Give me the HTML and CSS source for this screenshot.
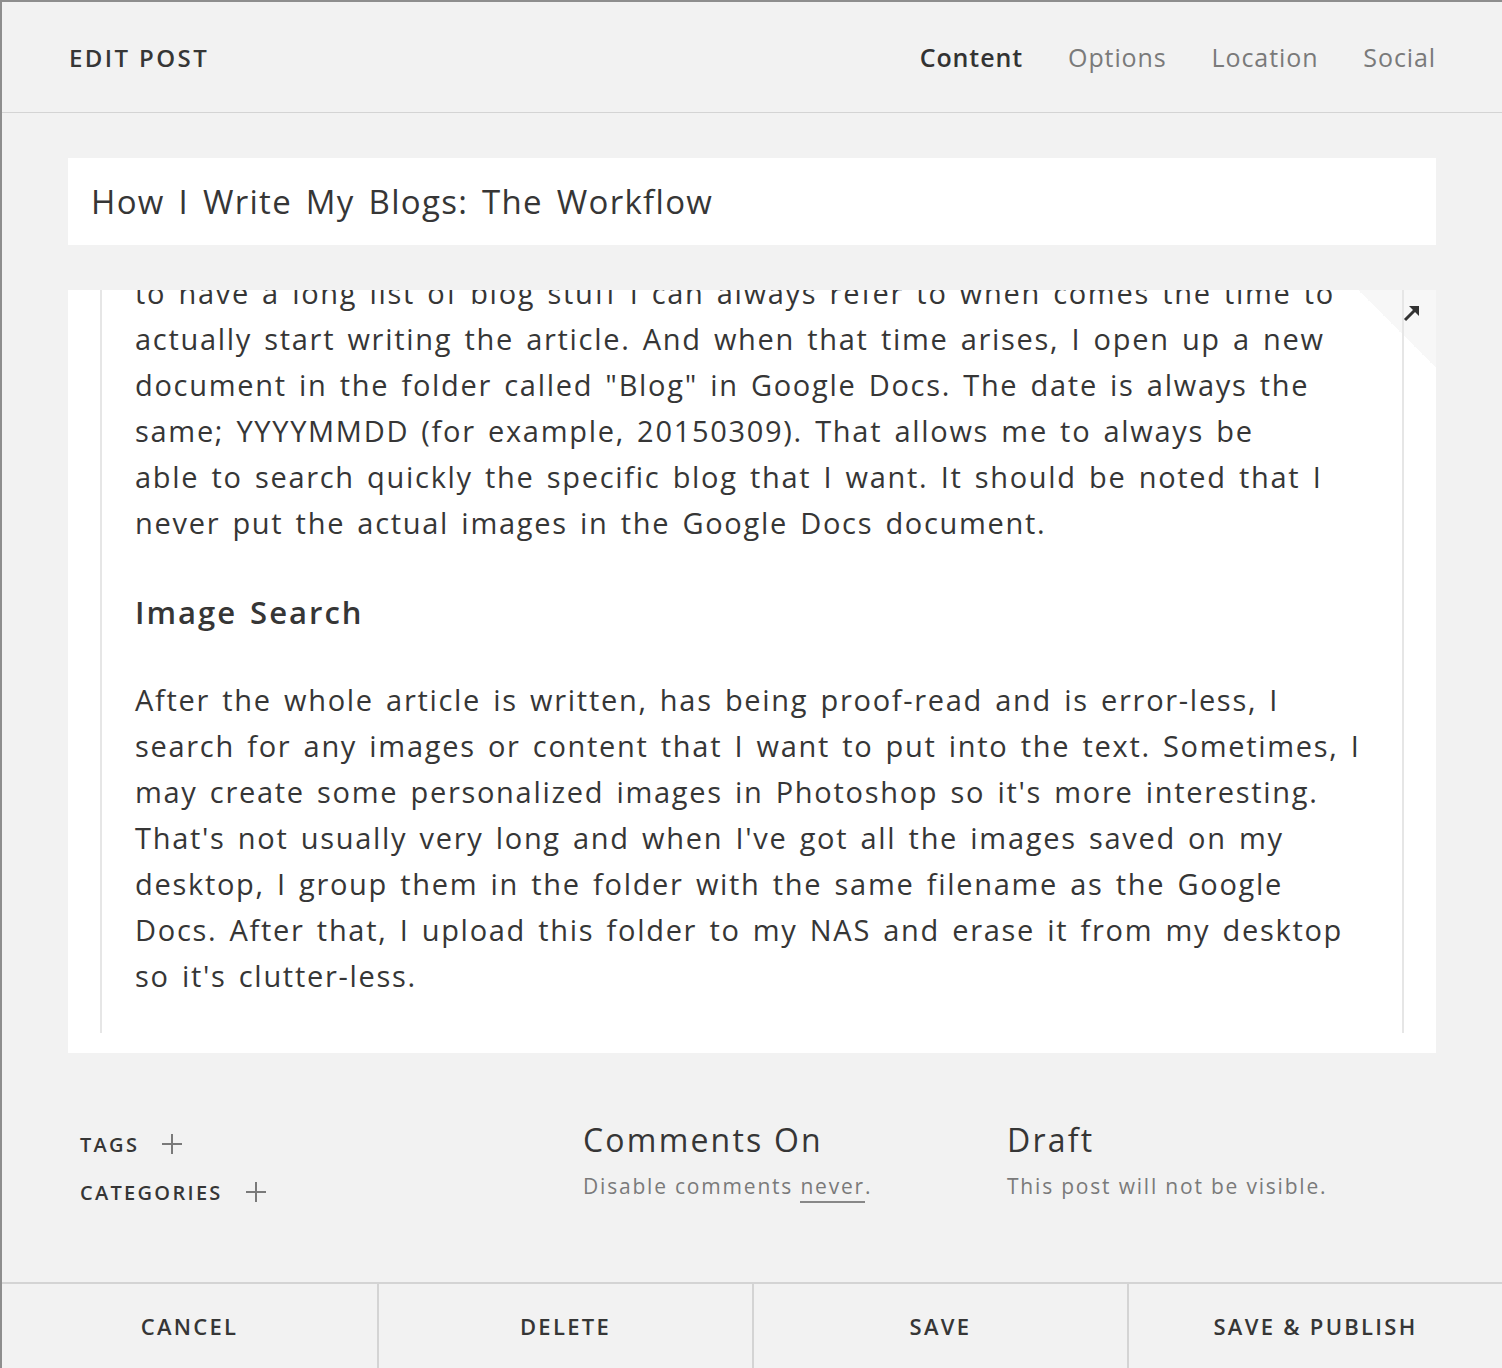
FILE: index.html
```html
<!DOCTYPE html>
<html>
<head>
    <title>Edit Post</title>
    <link rel="stylesheet" href="styles.css">
</head>
<body>
    <div class="editor">
        <div class="header">
            <h1>Edit Post</h1>
            <nav class="tabs">
                <a class="tab active">Content</a>
                <a class="tab">Options</a>
                <a class="tab">Location</a>
                <a class="tab">Social</a>
            </nav>
        </div>

        <div class="main">
            <div class="title-input">How I Write My Blogs: The Workflow</div>

            <div class="body-box">
                <div class="fold"></div>
                <svg class="expand" width="18" height="18" viewBox="0 0 18 18">
                    <path d="M2 16 L12 6" stroke="#333" stroke-width="3"/>
                    <path d="M6 2 H16 V12 Z" fill="#333"/>
                </svg>
                <div class="page">
                    <div class="text">
                        <p>to have a long list of blog stuff I can always refer to when comes the time to<br>
                        actually start writing the article. And when that time arises, I open up a new<br>
                        document in the folder called "Blog" in Google Docs. The date is always the<br>
                        same; YYYYMMDD (for example, 20150309). That allows me to always be<br>
                        able to search quickly the specific blog that I want. It should be noted that I<br>
                        never put the actual images in the Google Docs document.</p>
                        <h3>Image Search</h3>
                        <p>After the whole article is written, has being proof-read and is error-less, I<br>
                        search for any images or content that I want to put into the text. Sometimes, I<br>
                        may create some personalized images in Photoshop so it's more interesting.<br>
                        That's not usually very long and when I've got all the images saved on my<br>
                        desktop, I group them in the folder with the same filename as the Google<br>
                        Docs. After that, I upload this folder to my NAS and erase it from my desktop<br>
                        so it's clutter-less.</p>
                    </div>
                </div>
            </div>

            <div class="meta">
                <div class="taxonomy">
                    <div class="tax-row">
                        <span>Tags</span>
                        <svg class="plus" width="20" height="20" viewBox="0 0 20 20"><path d="M10 0 V20 M0 10 H20" stroke="#7a7a7a" stroke-width="2"/></svg>
                    </div>
                    <div class="tax-row">
                        <span>Categories</span>
                        <svg class="plus" width="20" height="20" viewBox="0 0 20 20"><path d="M10 0 V20 M0 10 H20" stroke="#7a7a7a" stroke-width="2"/></svg>
                    </div>
                </div>
                <div class="status">
                    <div class="status-title">Comments On</div>
                    <div class="status-note">Disable comments <u>never</u>.</div>
                </div>
                <div class="status">
                    <div class="status-title">Draft</div>
                    <div class="status-note">This post will not be visible.</div>
                </div>
            </div>
        </div>

        <div class="footer">
            <button>Cancel</button>
            <button>Delete</button>
            <button>Save</button>
            <button>Save &amp; Publish</button>
        </div>
    </div>
</body>
</html>
```

FILE: styles.css
```css
body {
    margin: 0;
    background: #f2f2f2;
    font-family: "Open Sans", Lato, sans-serif;
    color: #363636;
}

.editor {
    height: 1368px;
    box-sizing: border-box;
    border-top: 2px solid #8e8e8e;
    border-left: 2px solid #8e8e8e;
    display: flex;
    flex-direction: column;
}

/* Header with tabs */
.header {
    height: 110px;
    flex-shrink: 0;
    display: flex;
    align-items: center;
    justify-content: space-between;
    padding: 0 66px 0 67px;
    border-bottom: 1px solid #d4d4d4;
}

.header h1 {
    margin: 0;
    font-size: 24px;
    font-weight: 600;
    letter-spacing: 2.4px;
    text-transform: uppercase;
}

.tabs {
    display: flex;
    gap: 45px;
}

.tab {
    font-size: 25px;
    letter-spacing: 0.9px;
    color: #7a7a7a;
    cursor: pointer;
}

.tab.active {
    color: #333;
    font-weight: 600;
}

.main {
    flex: 1;
    display: flex;
    flex-direction: column;
    padding: 45px 66px 0 66px;
}

.title-input {
    height: 87px;
    flex-shrink: 0;
    background: #fff;
    box-sizing: border-box;
    padding-left: 23px;
    display: flex;
    align-items: center;
    font-size: 33px;
    letter-spacing: 1.3px;
    word-spacing: 4px;
}

/* Post body editor */
.body-box {
    position: relative;
    margin-top: 45px;
    height: 763px;
    flex-shrink: 0;
    background: #fff;
    overflow: hidden;
}

.page {
    position: relative;
    height: 100%;
    margin: 0 32px;
    border-left: 2px solid #e6e6e6;
    border-right: 2px solid #e6e6e6;
}

.text {
    padding-left: 33px;
    margin-top: -20px;
    font-size: 29px;
    letter-spacing: 1.7px;
    word-spacing: 3px;
    line-height: 46px;
    white-space: nowrap;
}

.text p {
    margin: 0 0 43px;
}

.text h3 {
    margin: 0 0 42px;
    font-size: 31px;
    font-weight: 600;
    letter-spacing: 2px;
    line-height: 46px;
}

.fold {
    position: absolute;
    top: 0;
    right: 0;
    width: 78px;
    height: 78px;
    background: linear-gradient(225deg, #f7f7f7 50%, transparent 50%);
}

.expand {
    position: absolute;
    top: 14px;
    right: 15px;
    z-index: 1;
}

/* Tags, comments, status */
.meta {
    flex: 1;
    display: grid;
    grid-template-columns: 503px 424px 1fr;
    padding: 68px 0 0 12px;
}

.taxonomy {
    padding-top: 11px;
    display: flex;
    flex-direction: column;
    gap: 24px;
}

.tax-row {
    display: flex;
    align-items: center;
    gap: 23px;
    height: 24px;
    font-size: 20px;
    font-weight: 600;
    letter-spacing: 2.3px;
    text-transform: uppercase;
}

.status-title {
    font-size: 32px;
    line-height: 38px;
    letter-spacing: 2.2px;
}

.status-note {
    margin-top: 13px;
    font-size: 21px;
    line-height: 28px;
    letter-spacing: 1.8px;
    color: #7a7a7a;
}

.status-note u {
    text-decoration: none;
    border-bottom: 2px solid #888;
    padding-bottom: 1px;
}

/* Bottom button bar */
.footer {
    height: 86px;
    flex-shrink: 0;
    box-sizing: border-box;
    border-top: 2px solid #d4d4d4;
    display: grid;
    grid-template-columns: repeat(4, 1fr);
}

.footer button {
    border: none;
    border-left: 2px solid #d4d4d4;
    background: transparent;
    font-family: inherit;
    font-size: 22px;
    font-weight: 600;
    letter-spacing: 2.3px;
    text-transform: uppercase;
    color: #363636;
    cursor: pointer;
}

.footer button:first-child {
    border-left: none;
}
```
